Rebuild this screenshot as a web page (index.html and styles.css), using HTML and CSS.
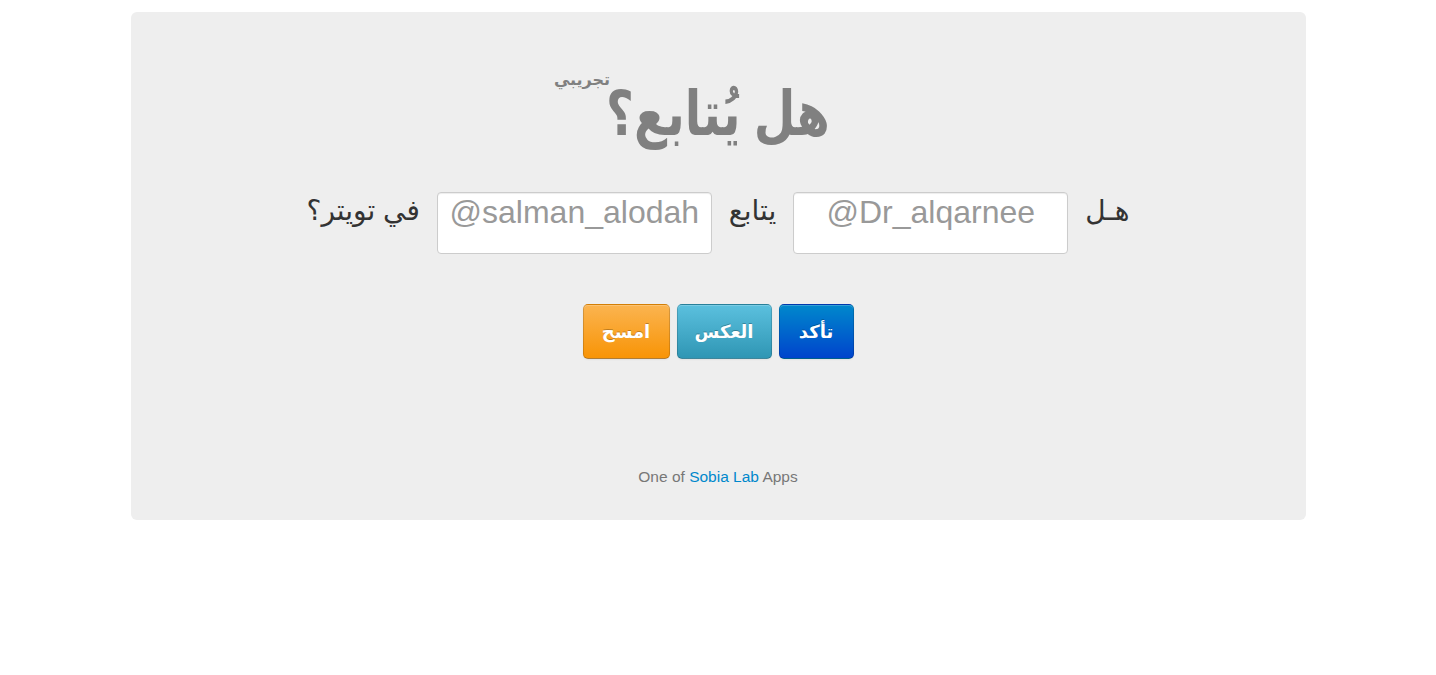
FILE: index.html
```html
<!DOCTYPE html>
<html lang="ar">
<head>
<meta charset="utf-8">
<title>هل يتابع؟</title>
<link rel="stylesheet" href="styles.css">
</head>
<body>
<div class="hero">
  <h1 class="title" dir="rtl"><span class="title-text"><span class="title-glyphs">هل يُتابع؟</span><sup class="beta">تجريبي</sup></span></h1>
  <div class="form-row" dir="rtl">
    <span class="label">هـل</span>
    <input class="handle" type="text" placeholder="@Dr_alqarnee">
    <span class="label">يتابع</span>
    <input class="handle" type="text" placeholder="@salman_alodah">
    <span class="label">في تويتر؟</span>
  </div>
  <div class="actions" dir="rtl">
    <button class="btn btn-primary">تأكد</button>
    <button class="btn btn-info">العكس</button>
    <button class="btn btn-warning">امسح</button>
  </div>
  <p class="footer">One of <a href="#">Sobia Lab</a> Apps</p>
</div>
</body>
</html>
```
FILE: styles.css
```css
html, body {
  margin: 0;
  padding: 0;
  background: #fff;
  font-family: "Liberation Sans", "DejaVu Sans", sans-serif;
  color: #333;
}

.hero {
  width: 1175px;
  margin: 12px auto 0;
  box-sizing: border-box;
  background: #eeeeee;
  border-radius: 6px;
  padding: 52px 40px 32px;
  text-align: center;
}

.title {
  margin: 0;
  font-size: 48px;
  line-height: 100px;
  font-weight: bold;
  color: #808080;
}

.title-text {
  position: relative;
  display: inline-block;
}

.title-glyphs {
  display: inline-block;
  transform: scaleY(1.3);
}

.beta {
  position: absolute;
  right: 100%;
  top: 6px;
  margin-right: -4px;
  font-size: 16px;
  line-height: 20px;
  color: #808080;
  white-space: nowrap;
}

.form-row {
  display: flex;
  justify-content: center;
  align-items: flex-start;
  gap: 17px;
  margin-top: 28px;
}

.label {
  font-size: 28px;
  color: #333;
  line-height: 38px;
  padding-top: 0;
}

.handle {
  width: 275px;
  height: 62px;
  box-sizing: border-box;
  border: 1px solid #cccccc;
  border-radius: 4px;
  background: #fff;
  font-family: "Liberation Sans", sans-serif;
  font-size: 32px;
  text-align: center;
  padding: 0 6px 22px;
  direction: ltr;
  box-shadow: inset 0 1px 1px rgba(0, 0, 0, 0.075);
}

.handle::placeholder {
  color: #999;
}

.actions {
  display: flex;
  justify-content: center;
  gap: 7px;
  margin-top: 50px;
}

.btn {
  height: 55px;
  padding: 0;
  border-radius: 5px;
  font-family: "Liberation Sans", "DejaVu Sans", sans-serif;
  font-size: 18px;
  font-weight: bold;
  color: #fff;
  text-shadow: 0 -1px 0 rgba(0, 0, 0, 0.25);
  border: 1px solid rgba(0, 0, 0, 0.15);
  border-bottom-color: rgba(0, 0, 0, 0.3);
  box-shadow: inset 0 1px 0 rgba(255, 255, 255, 0.2), 0 1px 2px rgba(0, 0, 0, 0.05);
}

.btn-primary {
  background: linear-gradient(#0088cc, #0044cc);
  width: 75px;
}

.btn-info {
  background: linear-gradient(#5bc0de, #2f96b4);
  width: 95px;
}

.btn-warning {
  background: linear-gradient(#fbb450, #f89406);
  width: 87px;
}

.footer {
  margin: 107px 0 0;
  font-size: 15.5px;
  color: #777;
  line-height: 22px;
}

.footer a {
  color: #0088cc;
  text-decoration: none;
}
```
